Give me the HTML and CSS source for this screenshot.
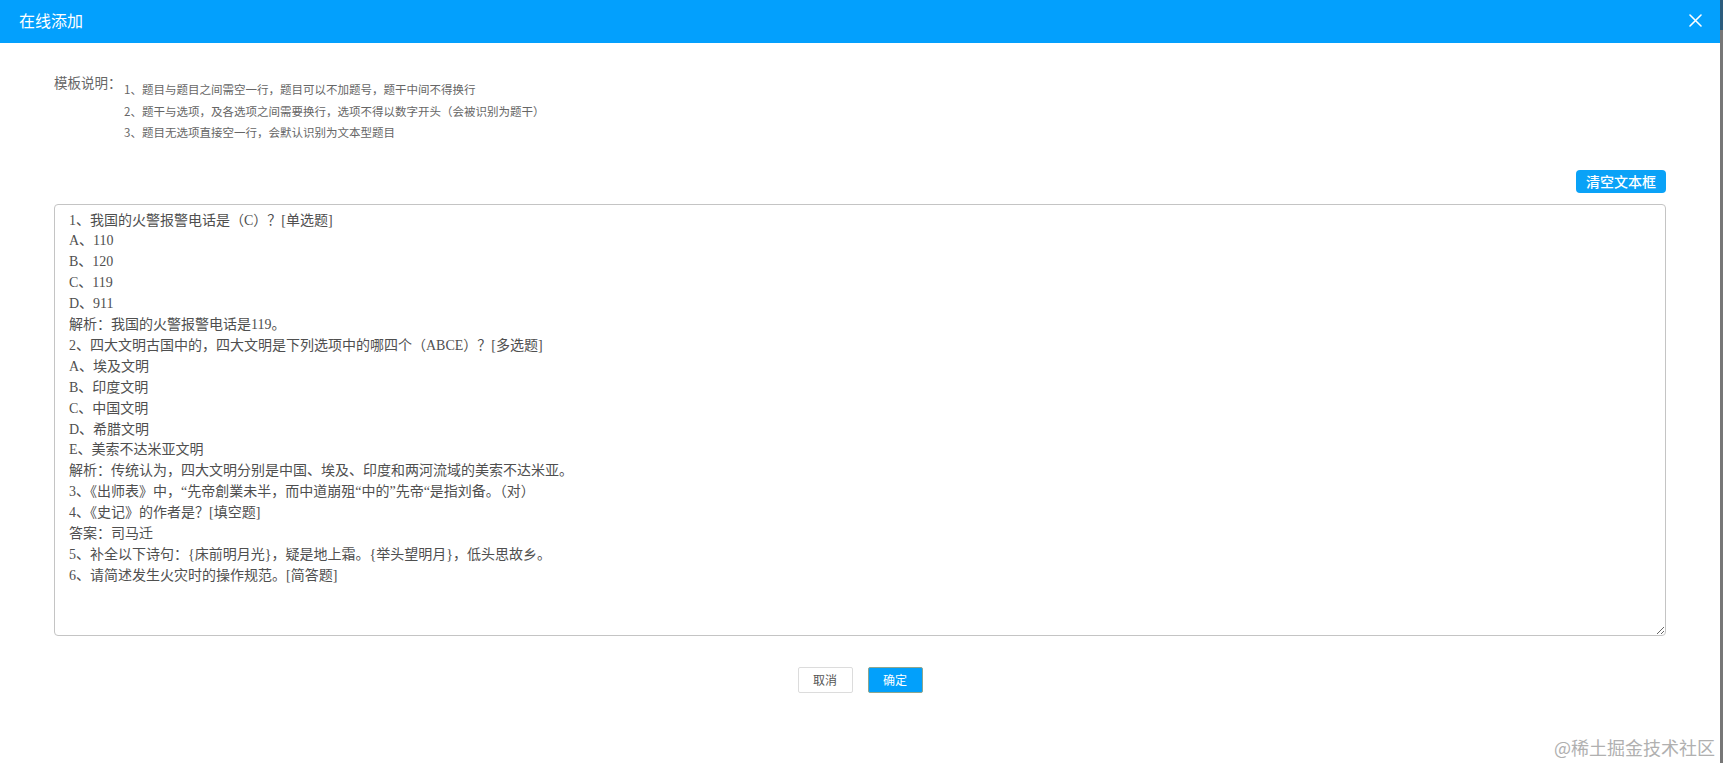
FILE: index.html
```html
<!DOCTYPE html>
<html lang="zh-CN">
<head>
<meta charset="utf-8">
<title>在线添加</title>
<link rel="stylesheet" href="styles.css">
</head>
<body>
<div class="page">
  <div class="main">
    <div class="header">
      <span class="title">在线添加</span>
      <button class="close" aria-label="关闭">
        <svg width="13" height="13" viewBox="0 0 13 13"><path d="M1 1L12 12M12 1L1 12" stroke="#fff" stroke-width="1.6" fill="none" stroke-linecap="round"/></svg>
      </button>
    </div>
    <div class="content">
      <div class="desc">
        <div class="desc-label">模板说明：</div>
        <ul class="desc-list">
          <li>1、题目与题目之间需空一行，题目可以不加题号，题干中间不得换行</li>
          <li>2、题干与选项，及各选项之间需要换行，选项不得以数字开头（会被识别为题干）</li>
          <li>3、题目无选项直接空一行，会默认识别为文本型题目</li>
        </ul>
      </div>
      <div class="toolbar">
        <button class="btn-clear">清空文本框</button>
      </div>
      <textarea class="editor">1、我国的火警报警电话是（C）？[单选题]
A、110
B、120
C、119
D、911
解析：我国的火警报警电话是119。
2、四大文明古国中的，四大文明是下列选项中的哪四个（ABCE）？[多选题]
A、埃及文明
B、印度文明
C、中国文明
D、希腊文明
E、美索不达米亚文明
解析：传统认为，四大文明分别是中国、埃及、印度和两河流域的美索不达米亚。
3、《出师表》中，“先帝創業未半，而中道崩殂“中的”先帝“是指刘备。（对）
4、《史记》的作者是？[填空题]
答案：司马迁
5、补全以下诗句：{床前明月光}，疑是地上霜。{举头望明月}，低头思故乡。
6、请简述发生火灾时的操作规范。[简答题]</textarea>
      <div class="actions">
        <button class="btn btn-cancel">取消</button>
        <button class="btn btn-ok">确定</button>
      </div>
    </div>
  </div>
  <div class="edge"></div>
</div>
<div class="watermark">@稀土掘金技术社区</div>
</body>
</html>
```
FILE: styles.css
```css
html, body {
  margin: 0;
  padding: 0;
  height: 100%;
  overflow: hidden;
  background: #fff;
  font-family: "Noto Sans CJK SC", "Noto Sans", sans-serif;
}
.page {
  display: flex;
  height: 100%;
}
.main {
  flex: 1;
  min-width: 0;
}
.edge {
  width: 3px;
  background: linear-gradient(to bottom, #2c5c7c 0, #2c5c7c 30px, #777 30px, #777 100%);
}
.header {
  height: 43px;
  background: #03a0fd;
  display: flex;
  align-items: center;
  justify-content: space-between;
  padding: 0 18px 0 19px;
}
.title {
  color: #fff;
  font-size: 16px;
  line-height: 20px;
  margin-top: -3px;
}
.close {
  border: 0;
  background: transparent;
  padding: 0;
  width: 13px;
  height: 13px;
  display: flex;
  margin-top: -2px;
  cursor: pointer;
}
.content {
  padding: 0 54px;
}
.desc {
  display: flex;
  padding-top: 30px;
  color: #666;
}
.desc-label {
  font-size: 13.5px;
  line-height: 18px;
  width: 70px;
  flex: none;
}
.desc-list {
  list-style: none;
  margin: 6px 0 0;
  padding: 0;
  font-size: 11.5px;
}
.desc-list li {
  line-height: 21.5px;
}
.toolbar {
  display: flex;
  justify-content: flex-end;
  margin-top: 26px;
}
.btn-clear {
  width: 90px;
  height: 23px;
  border: 0;
  border-radius: 4px;
  background: #0aa2f7;
  color: #fff;
  font-family: "Noto Sans CJK SC", sans-serif;
  font-size: 14px;
  font-weight: 500;
  padding: 0;
  line-height: 23px;
}
.editor {
  display: block;
  box-sizing: border-box;
  width: 100%;
  height: 432px;
  margin: 11px 0 0;
  border: 1px solid #c4c4c4;
  border-radius: 4px;
  padding: 6px 14px;
  font-family: "Liberation Serif", "Noto Sans CJK SC", serif;
  font-size: 14px;
  line-height: 20.9px;
  color: #4f4f4f;
  outline: none;
  resize: both;
}
.actions {
  display: flex;
  justify-content: center;
  gap: 15px;
  margin-top: 31px;
}
.btn {
  box-sizing: border-box;
  width: 55px;
  height: 26px;
  border-radius: 2px;
  font-family: "Noto Sans CJK SC", sans-serif;
  font-size: 12px;
  padding: 0;
  line-height: 24px;
}
.btn-cancel {
  background: #fff;
  border: 1px solid #dcdcdc;
  color: #555;
}
.btn-ok {
  background: #02a0fb;
  border: 1px solid #8ea68e;
  color: #fff;
}
.watermark {
  position: absolute;
  right: 8px;
  bottom: 6px;
  font-family: "Noto Sans CJK SC", sans-serif;
  font-size: 18px;
  line-height: 20px;
  color: #b0b0b0;
  pointer-events: none;
}
```
